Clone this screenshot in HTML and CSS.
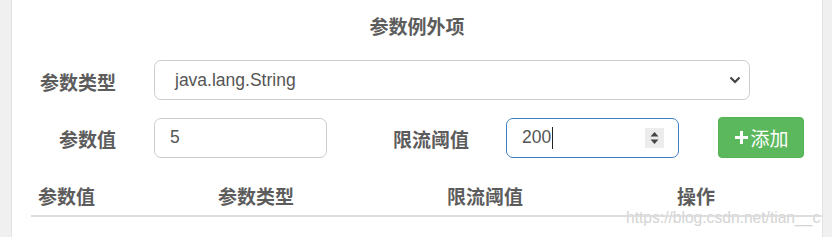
FILE: index.html
```html
<!DOCTYPE html>
<html lang="zh-CN">
<head>
<meta charset="utf-8">
<title>参数例外项</title>
<link rel="stylesheet" href="styles.css">
</head>
<body>
<div class="page">
  <div class="side side-left"></div>
  <main class="panel">
    <h3 class="title">参数例外项</h3>
    <div class="row">
      <label class="label label-first">参数类型</label>
      <div class="field select">
        <span class="value">java.lang.String</span>
        <svg class="chev" width="12" height="8" viewBox="0 0 12 8"><path d="M1.5 1.5 L6 6 L10.5 1.5" fill="none" stroke="#444" stroke-width="2.2"/></svg>
      </div>
    </div>
    <div class="row row2">
      <label class="label label-first">参数值</label>
      <div class="field short"><span class="value">5</span></div>
      <label class="label label-mid">限流阈值</label>
      <div class="field short focus">
        <span class="value">200</span><span class="caret"></span>
        <span class="spin"><svg width="19" height="20" viewBox="0 0 19 20"><path d="M5.5 8.5 L9.5 4 L13.5 8.5 Z" fill="#444"/><path d="M5.5 11.5 L9.5 16 L13.5 11.5 Z" fill="#444"/></svg></span>
      </div>
      <button class="btn-add"><svg class="plus" width="13" height="13" viewBox="0 0 13 13"><path d="M5 0 H8 V5 H13 V8 H8 V13 H5 V8 H0 V5 H5 Z" fill="#fff"/></svg>添加</button>
    </div>
    <div class="table">
      <div class="th">参数值</div>
      <div class="th">参数类型</div>
      <div class="th">限流阈值</div>
      <div class="th">操作</div>
    </div>
    <div class="watermark">https://blog.csdn.net/tian__c</div>
  </main>
  <div class="side side-right"></div>
</div>
</body>
</html>
```

FILE: styles.css
```css
html, body {
  margin: 0;
  padding: 0;
  background: #fff;
}
body {
  font-family: "Noto Sans CJK SC", "Liberation Sans", sans-serif;
  color: #5a5a5a;
}
.page {
  display: flex;
  width: 832px;
  height: 237px;
  overflow: hidden;
}
.side {
  background: #f0f0f0;
  flex: none;
}
.side-left {
  width: 11px;
  border-right: 1px solid #e2e2e2;
}
.side-right {
  width: 9px;
  border-left: 1px solid #e2e2e2;
}
.panel {
  position: relative;
  width: 810px;
  flex: none;
  overflow: hidden;
}
.title {
  margin: 0;
  height: 60px;
  line-height: 52px;
  font-size: 19px;
  font-weight: 700;
  text-align: center;
  color: #5c5c5c;
}
.row {
  display: flex;
  align-items: center;
  height: 40px;
}
.row2 {
  margin-top: 17px;
  height: 41px;
}
.label {
  box-sizing: border-box;
  flex: none;
  text-align: right;
  font-size: 19px;
  font-weight: 700;
  color: #5c5c5c;
  padding-top: 2px;
}
.label-first {
  width: 142px;
  padding-right: 38px;
}
.label-mid {
  width: 179px;
  padding-right: 37px;
}
.field {
  box-sizing: border-box;
  height: 40px;
  border: 1px solid #cccccc;
  border-radius: 7px;
  display: flex;
  align-items: center;
  font-family: "Liberation Sans", Arial, sans-serif;
  font-size: 17.5px;
  color: #555;
  flex: none;
}
.select {
  width: 596px;
  padding-left: 20px;
  padding-right: 8px;
}
.select .value {
  flex: 1;
}
.chev {
  display: block;
}
.short {
  width: 173px;
  padding-left: 15px;
}
.focus {
  border-color: #3f7fc1;
  position: relative;
}
.caret {
  display: inline-block;
  width: 1px;
  height: 22px;
  background: #222;
  margin-left: 1px;
}
.spin {
  position: absolute;
  left: 138px;
  top: 9px;
  width: 19px;
  height: 20px;
  background: #ececec;
}
.spin svg {
  display: block;
}
.btn-add {
  box-sizing: border-box;
  margin-left: 39px;
  width: 86px;
  height: 41px;
  background: #5cb85c;
  border: 1px solid #55b255;
  border-radius: 4px;
  color: #fff;
  font-family: "Noto Sans CJK SC", sans-serif;
  font-size: 19px;
  font-weight: 400;
  display: flex;
  align-items: center;
  justify-content: center;
  gap: 2px;
  padding: 0 0 0 2px;
}
.plus {
  display: block;
}
.table {
  margin-top: 19px;
  margin-left: 19px;
  display: grid;
  grid-template-columns: 180px 229px 230px 1fr;
  border-bottom: 2px solid #dddddd;
}
.th {
  height: 38px;
  line-height: 38px;
  padding-left: 7px;
  font-size: 19px;
  font-weight: 700;
  color: #5c5c5c;
}
.watermark {
  position: absolute;
  left: 614px;
  top: 209px;
  font-family: "Liberation Sans", Arial, sans-serif;
  font-size: 15.6px;
  line-height: 18px;
  color: #d4d4d4;
  white-space: nowrap;
  text-shadow: 0 0 1px #fff;
}
```
